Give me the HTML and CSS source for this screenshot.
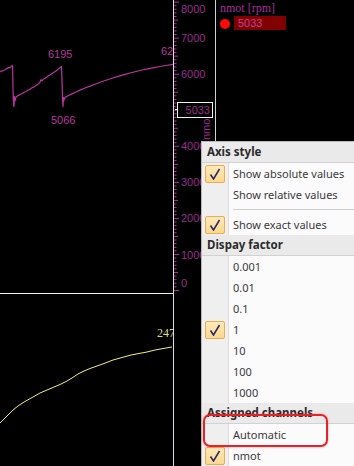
FILE: index.html
```html
<!DOCTYPE html>
<html lang="en">
<head>
  <meta charset="UTF-8" />
  <title>nmot chart</title>
  <link rel="stylesheet" href="styles.css">
</head>
<body>
  <div class="screen">

    <!-- Plot area: two stacked charts -->
    <div class="charts">
      <div class="chart chart-top">
        <svg width="173" height="293" viewBox="0 0 173 293">
          <path class="trace-rpm" d="M0 72 L3 70.5 L5 69.8 L7 68.6 L9 67.5 L10 67.9 L12 65.5 L12.6 66 L13 90 L13.6 104 L14 107 L14.4 96 L15 101 L16 97 L18 95.6 L20 94.5 L22 93.8 L24 92.2 L26 91.5 L28 90.1 L30 89.3 L32 87.8 L34 86.9 L36 85.6 L38 84.2 L40 82.1 L41 79.8 L42 80.6 L44 78.7 L46 77.6 L48 76 L50 75.1 L52 73.6 L54 72.3 L56 70.9 L58 69.4 L60 67.8 L61.5 66.6 L62 80 L62.6 100 L63 107 L63.4 97 L64 100 L65 97.5 L68 95.8 L72 93.9 L76 92 L80 90.1 L85 88 L90 86.1 L95 84.2 L100 82.3 L106 80.3 L112 78.3 L118 76.4 L124 74.6 L130 73 L136 71.5 L142 70 L148 68.8 L154 67.6 L160 66.5 L166 65.5 L173 64.4" />
          <text class="trace-label" x="48" y="58">6195</text>
          <text class="trace-label" x="51" y="124">5066</text>
          <text class="trace-label" x="161" y="55">6242</text>
        </svg>
      </div>
      <div class="chart chart-bottom">
        <svg width="173" height="172" viewBox="0 0 173 172">
          <path class="trace-speed" d="M0 129 L4 125 L8 121 L13 116 L18 112 L24 108 L33 103 L40 99 L47 96 L54 93 L60 90.5 L66 87.5 L72 84 L78 80 L84 77 L90 74.5 L97 72 L104 69.5 L113 66 L122 63.5 L131 61 L140 59.3 L147 58 L155 56 L163 54.5 L172 53" />
          <text class="speed-label" x="157" y="43">247</text>
        </svg>
      </div>
    </div>

    <!-- Y axis for nmot -->
    <div class="axis">
      <svg id="axis-svg" width="42" height="466" viewBox="0 0 42 466">
        <g id="ticks"></g>
        <text class="axis-label" x="7" y="13">8000</text>
        <text class="axis-label" x="7" y="42">7000</text>
        <text class="axis-label" x="7" y="78">6000</text>
        <text class="axis-label" x="7" y="150">4000</text>
        <text class="axis-label" x="7" y="186">3000</text>
        <text class="axis-label" x="7" y="222">2000</text>
        <text class="axis-label" x="7" y="259">1000</text>
        <text class="axis-label" x="7" y="287">0</text>
        <text class="axis-title" transform="translate(36 140) rotate(-90)">nmot</text>
        <rect class="cursor-box" x="3.5" y="102.5" width="35" height="15" />
        <line class="cursor-mark" x1="1" y1="109.5" x2="4" y2="109.5" />
        <text class="axis-label" x="36" y="114" text-anchor="end">5033</text>
      </svg>
    </div>

    <!-- Legend -->
    <div class="legend">
      <div class="legend-title">nmot [rpm]</div>
      <div class="legend-row">
        <span class="legend-dot"></span>
        <span class="legend-value">5033</span>
      </div>
    </div>

    <!-- Context menu -->
    <div class="menu">
      <div class="menu-head">Axis style</div>
      <div class="menu-item">
        <span class="check on"><svg width="12" height="12" viewBox="0 0 12 12"><path d="M1.5 6.5 L4.5 11 L10.5 1" /></svg></span>
        <span class="menu-text">Show absolute values</span>
      </div>
      <div class="menu-item">
        <span class="check"></span>
        <span class="menu-text">Show relative values</span>
      </div>
      <div class="menu-sep"></div>
      <div class="menu-item">
        <span class="check on"><svg width="12" height="12" viewBox="0 0 12 12"><path d="M1.5 6.5 L4.5 11 L10.5 1" /></svg></span>
        <span class="menu-text">Show exact values</span>
      </div>
      <div class="menu-head">Dispay factor</div>
      <div class="menu-item"><span class="check"></span><span class="menu-text">0.001</span></div>
      <div class="menu-item"><span class="check"></span><span class="menu-text">0.01</span></div>
      <div class="menu-item"><span class="check"></span><span class="menu-text">0.1</span></div>
      <div class="menu-item">
        <span class="check on"><svg width="12" height="12" viewBox="0 0 12 12"><path d="M1.5 6.5 L4.5 11 L10.5 1" /></svg></span>
        <span class="menu-text">1</span>
      </div>
      <div class="menu-item"><span class="check"></span><span class="menu-text">10</span></div>
      <div class="menu-item"><span class="check"></span><span class="menu-text">100</span></div>
      <div class="menu-item"><span class="check"></span><span class="menu-text">1000</span></div>
      <div class="menu-head">Assigned channels</div>
      <div class="menu-item"><span class="check"></span><span class="menu-text">Automatic</span></div>
      <div class="menu-item">
        <span class="check on"><svg width="12" height="12" viewBox="0 0 12 12"><path d="M1.5 6.5 L4.5 11 L10.5 1" /></svg></span>
        <span class="menu-text">nmot</span>
      </div>
    </div>

    <!-- annotation around "Automatic" -->
    <div class="highlight"></div>
  </div>

  <script>
    // minor / major ticks of the rpm axis, 1000 rpm = 36px, 0 at y=290
    var g = document.getElementById('ticks');
    var svgNs = 'http://www.w3.org/2000/svg';
    for (var i = 0; i <= 82; i++) {
      var y = 290.5 - i * 3.605;
      if (y < 0) break;
      var t = document.createElementNS(svgNs, 'line');
      t.setAttribute('x1', 0);
      t.setAttribute('x2', i % 10 === 0 ? 5 : (i % 5 === 0 ? 4 : 2.5));
      t.setAttribute('y1', y);
      t.setAttribute('y2', y);
      t.setAttribute('class', 'tick');
      g.appendChild(t);
    }
  </script>
</body>
</html>
```

FILE: styles.css
```css
body {
  margin: 0;
  background: #000;
  font-family: "Liberation Sans", Arial, sans-serif;
}
.screen {
  position: relative;
  display: flex;
  width: 354px;
  height: 466px;
  overflow: hidden;
  background: #000;
}
.charts {
  display: flex;
  flex-direction: column;
  width: 173px;
  border-right: 1px solid #e6d6e6;
}
.chart svg {
  display: block;
}
.chart-top {
  height: 293px;
  border-bottom: 1px solid #f0f0f0;
}
.chart-bottom {
  flex: 1;
}
.trace-rpm {
  fill: none;
  stroke: #b8369f;
  stroke-width: 1.2;
}
.trace-speed {
  fill: none;
  stroke: #f4f07a;
  stroke-width: 1;
}
.trace-label {
  font-size: 11px;
  fill: #b33a9c;
}
.speed-label {
  font-family: "Liberation Serif", serif;
  font-size: 12px;
  fill: #dede7a;
}
.axis {
  width: 41px;
  border-right: 1px solid #d0d0d0;
}
.axis svg {
  display: block;
}
.tick {
  stroke: #b0309a;
  stroke-width: 1;
}
.axis-label {
  font-size: 11px;
  fill: #9c2d8c;
}
.axis-title {
  font-size: 11px;
  fill: #9c2d8c;
}
.cursor-box {
  fill: #000;
  stroke: #f2f2f2;
  stroke-width: 1;
}
.cursor-mark {
  stroke: #fff;
  stroke-width: 1;
}
.legend {
  flex: 1;
  padding: 2px 0 0 4px;
}
.legend-title {
  font-family: "Liberation Serif", serif;
  font-size: 12px;
  line-height: 13px;
  color: #a5309a;
}
.legend-row {
  display: flex;
  align-items: center;
  gap: 4px;
  margin-top: 1px;
}
.legend-dot {
  width: 10px;
  height: 10px;
  margin-top: 1px;
  border-radius: 50%;
  background: #ff0808;
}
.legend-value {
  width: 48px;
  height: 14px;
  padding-left: 4px;
  background: #800000;
  color: #c23f9a;
  font-size: 11px;
  line-height: 15px;
}
.menu {
  position: absolute;
  left: 201px;
  top: 141px;
  width: 170px;
  height: 340px;
  border: 1px solid #b8b8b8;
  background: linear-gradient(to right, #efefef 0 26px, #dcdcdc 26px 27px, #fbfbfb 27px);
  font-family: "Noto Sans", "Open Sans", sans-serif;
  font-size: 11px;
  color: #3a3a3a;
}
.menu-head {
  height: 20px;
  line-height: 20px;
  padding-left: 5px;
  background: #eaeaea;
  border-bottom: 1px solid #d2d2d2;
  font-weight: bold;
  font-size: 11.5px;
  color: #2b2b2b;
}
.menu-item {
  display: flex;
  align-items: center;
  height: 21px;
}
.check {
  display: flex;
  align-items: center;
  justify-content: center;
  box-sizing: border-box;
  width: 20px;
  height: 18px;
  margin: 0 8px 0 3px;
}
.check.on {
  border: 1px solid #e9ac58;
  border-radius: 2px;
  background: linear-gradient(#fee9b8, #fbd88e);
}
.check svg path {
  fill: none;
  stroke: #22276a;
  stroke-width: 1.5;
}
.menu-sep {
  height: 9px;
  margin-left: 31px;
  background: linear-gradient(#d0d0d0, #d0d0d0) 0 4px / 100% 1px no-repeat;
}
.highlight {
  position: absolute;
  left: 203px;
  top: 414px;
  width: 121px;
  height: 29px;
  border: 2px solid #e5242a;
  border-radius: 7px;
  box-shadow: 0 0 2px rgba(230, 30, 40, 0.5);
}
```
